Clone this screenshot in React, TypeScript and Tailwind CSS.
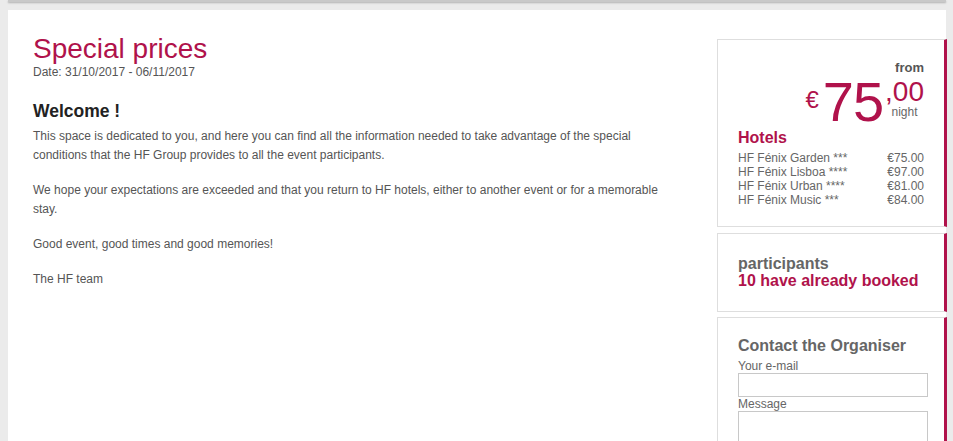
import React from "react";

const PINK = "text-[#b0124b]";

export default function App() {
  const hotels = [
    ["HF Fénix Garden ***", "€75.00"],
    ["HF Fénix Lisboa ****", "€97.00"],
    ["HF Fénix Urban ****", "€81.00"],
    ["HF Fénix Music ***", "€84.00"],
  ];
  return (
    <div className="w-[953px] h-[441px] overflow-hidden bg-[#ebebeb] font-['Liberation_Sans',Arial,sans-serif]">
      <div className="ml-[8px] w-[938px] h-[2px] bg-[#c9c9c9] shadow-[0_1px_2px_rgba(0,0,0,0.25)]" />
      <div className="mt-[8px] ml-[8px] w-[938px] h-[440px] bg-white flex items-start">
        <div className="pl-[25px] pt-[23px] w-[680px] shrink-0">
          <h1 className={`text-[28px] leading-[32px] ${PINK}`}>Special prices</h1>
          <div className="text-[12px] leading-[14px] text-[#555]">Date: 31/10/2017 - 06/11/2017</div>
          <h2 className="mt-[22px] text-[17.5px] leading-[20px] font-bold text-[#222]">Welcome !</h2>
          <div className="mt-[6px] text-[12px] leading-[19px] text-[#555] w-[640px]">
            <p className="mb-[16px]">
              This space is dedicated to you, and here you can find all the information needed to take advantage of the special conditions that the HF Group provides to all the event participants.
            </p>
            <p className="mb-[16px]">
              We hope your expectations are exceeded and that you return to HF hotels, either to another event or for a memorable stay.
            </p>
            <p className="mb-[16px]">Good event, good times and good memories!</p>
            <p>The HF team</p>
          </div>
        </div>
        <div className="ml-[29px] mt-[29px] w-[230px] shrink-0 flex flex-col">
          <div className="shrink-0 h-[188px] border border-[#dedede] border-r-[3px] border-r-[#b0124b] pl-[20px] pr-[20px] pt-[20px]">
            <div className="text-right text-[13px] leading-[15px] font-bold text-[#555]">from</div>
            <div className="mt-[3px] flex justify-end items-start">
              <span className={`text-[24px] leading-[24px] mt-[10px] mr-[4px] ${PINK}`}>€</span>
              <span className={`mt-[1px] text-[56px] leading-[46px] tracking-[-1px] ${PINK}`}>75</span>
              <div className="flex flex-col items-center ml-[2px]">
                <span className={`text-[28px] leading-[28px] ${PINK}`}>,00</span>
                <span className="text-[12px] leading-[13px] text-[#666]">night</span>
              </div>
            </div>
            <div className={`mt-[4px] text-[16px] leading-[18px] font-bold ${PINK}`}>Hotels</div>
            <div className="mt-[4px] text-[12px] leading-[14px] text-[#666]">
              {hotels.map(([n, p]) => (
                <div key={n} className="flex justify-between">
                  <span>{n}</span>
                  <span>{p}</span>
                </div>
              ))}
            </div>
          </div>
          <div className="mt-[6px] shrink-0 h-[79px] border border-[#dedede] border-r-[3px] border-r-[#b0124b] pl-[20px] pt-[21px]">
            <div className="text-[16px] leading-[17px] font-bold text-[#666]">participants</div>
            <div className={`text-[16px] leading-[17px] font-bold ${PINK}`}>10 have already booked</div>
          </div>
          <div className="mt-[5px] shrink-0 h-[200px] border border-[#dedede] border-r-[3px] border-r-[#b0124b] pl-[20px] pt-[19px]">
            <div className="text-[16px] leading-[18px] font-bold text-[#666]">Contact the Organiser</div>
            <div className="mt-[5px] text-[12px] leading-[13px] text-[#666]">Your e-mail</div>
            <div className="w-[190px] h-[24px] border border-[#c8c8c8]" />
            <div className="mt-[1px] text-[12px] leading-[13px] text-[#666]">Message</div>
            <div className="w-[190px] h-[60px] border border-[#c8c8c8]" />
          </div>
        </div>
      </div>
    </div>
  );
}
